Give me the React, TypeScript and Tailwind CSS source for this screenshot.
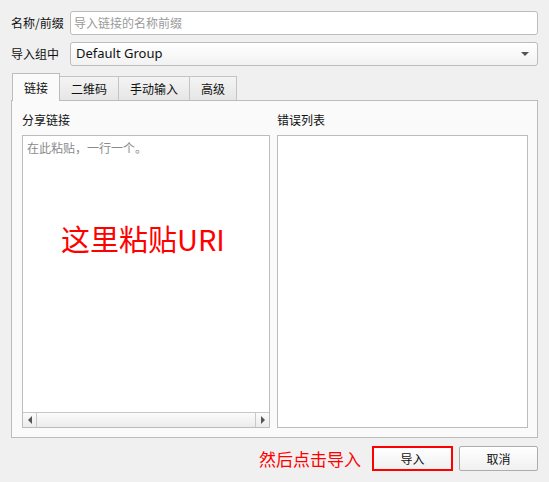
import React from 'react';

const font = { fontFamily: '"Noto Sans CJK SC", "Microsoft YaHei", "Noto Sans", sans-serif' };

function Tab({ label, active }: { label: string; active?: boolean }) {
  if (active) {
    return (
      <div className="relative z-10 -mb-px flex h-[28px] w-[48px] items-center justify-center border border-b-0 border-[#bcbcbc] bg-[#fafafa] text-[12px] text-[#111]">
        {label}
      </div>
    );
  }
  return (
    <div className="mt-[3px] -ml-px flex h-[24px] items-center justify-center border border-b-0 border-[#c4c4c4] bg-gradient-to-b from-[#f4f4f4] to-[#e6e6e6] px-[11px] text-[12px] text-[#111]">
      {label}
    </div>
  );
}

function ScrollBar() {
  return (
    <div className="flex h-[15px] border-t border-[#c8c8c8] bg-gradient-to-b from-[#fbfbfb] to-[#ececec]">
      <div className="flex w-[14px] items-center justify-center border-r border-[#c8c8c8]">
        <div className="h-0 w-0 border-y-[4px] border-r-[4px] border-y-transparent border-r-[#555]" />
      </div>
      <div className="flex-1" />
      <div className="flex w-[14px] items-center justify-center border-l border-[#c8c8c8]">
        <div className="h-0 w-0 border-y-[4px] border-l-[4px] border-y-transparent border-l-[#555]" />
      </div>
    </div>
  );
}

export default function App() {
  return (
    <div className="h-[482px] w-[549px] bg-[#f0f0f0] px-[11px] pt-[11px] text-[12px] text-[#111]" style={font}>
      <div className="flex items-center">
        <div className="w-[59px]">名称/前缀</div>
        <div className="flex h-[24px] flex-1 items-center rounded-[3px] border border-[#bdbdbd] bg-white px-[3px] text-[#9a9a9a]">
          导入链接的名称前缀
        </div>
      </div>

      <div className="mt-[7px] flex items-center">
        <div className="w-[59px]">导入组中</div>
        <div className="flex h-[24px] flex-1 items-center justify-between rounded-[3px] border border-[#bdbdbd] bg-gradient-to-b from-white to-[#f2f2f2] pl-[5px] pr-[8px]">
          <span className="text-[13px]" style={{ fontFamily: '"Noto Sans", "Liberation Sans", sans-serif' }}>Default Group</span>
          <div className="h-0 w-0 border-x-[4px] border-t-[4px] border-x-transparent border-t-[#555]" />
        </div>
      </div>

      <div className="mt-[7px] flex items-end pl-px">
        <Tab label="链接" active />
        <Tab label="二维码" />
        <Tab label="手动输入" />
        <Tab label="高级" />
      </div>

      <div className="flex h-[338px] w-[527px] gap-[7px] border border-[#bcbcbc] bg-[#fafafa] pb-[9px] pl-[10px] pr-[9px] pt-[11px]">
        <div className="flex w-[248px] flex-col">
          <div className="mb-[7px] h-[16px] leading-[16px]">分享链接</div>
          <div className="relative flex flex-1 flex-col border border-[#bcbcbc] bg-white">
            <div className="flex-1 px-[4px] pt-[3px] text-[#8a8a8a]">在此粘贴，一行一个。</div>
            <div className="pointer-events-none absolute left-[38px] top-[85px] text-[29px] leading-[34px] text-[#ff0000]">这里粘贴URI</div>
            <ScrollBar />
          </div>
        </div>
        <div className="flex flex-1 flex-col">
          <div className="mb-[7px] h-[16px] leading-[16px]">错误列表</div>
          <div className="flex-1 border border-[#bcbcbc] bg-white" />
        </div>
      </div>

      <div className="mt-[8px] flex items-center justify-end">
        <div className="mr-[11px] text-[17px] leading-[24px] text-[#ff0000]">然后点击导入</div>
        <div className="flex h-[25px] w-[81px] items-center justify-center border-2 border-[#ff0000] bg-gradient-to-b from-white to-[#f0f0f0]">
          导入
        </div>
        <div className="ml-[6px] flex h-[25px] w-[79px] items-center justify-center rounded-[2px] border border-[#adadad] bg-gradient-to-b from-white to-[#f0f0f0]">
          取消
        </div>
      </div>
    </div>
  );
}
